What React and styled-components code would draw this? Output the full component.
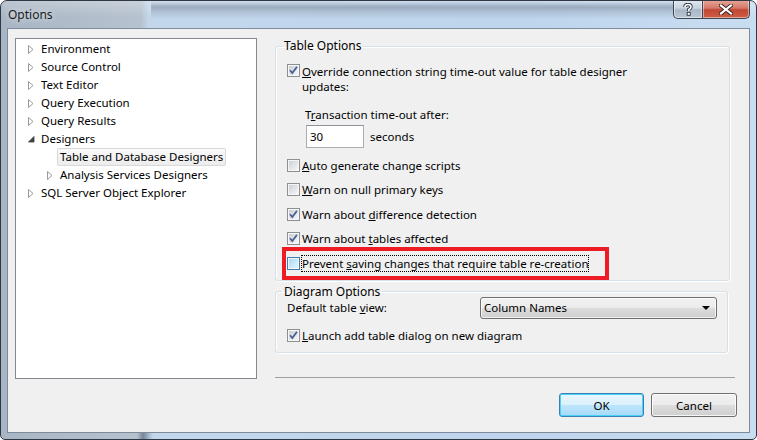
import React from "react";
import styled, { createGlobalStyle } from "styled-components";

const Global = createGlobalStyle`
  html, body { margin: 0; padding: 0; background: #fff; }
  body { font-family: "Noto Sans", "Liberation Sans", sans-serif; font-size: 11.5px; color: #000; }
`;

const Window = styled.div`
  width: 757px;
  height: 440px;
  box-sizing: border-box;
  border: 1px solid #2f3742;
  border-radius: 7px 7px 5px 5px;
  display: flex;
  flex-direction: column;
  overflow: hidden;
  background:
    linear-gradient(to right, rgba(40,50,70,0) 0, rgba(40,50,70,0) 136px, rgba(40,55,80,0.45) 142px, rgba(40,55,80,0) 152px) bottom / 100% 7px no-repeat,
    linear-gradient(to right, #a8b5c4 0, #b6c2cf 140px, #c3d7ec 148px, #bed5ed 70%, #c9ddf1 100%);
`;

const TitleBar = styled.div`
  height: 27px;
  display: flex;
  align-items: flex-start;
  padding-left: 7px;
  background:
    linear-gradient(to bottom, rgba(70,80,100,0) 0, rgba(70,80,100,0.35) 6px, rgba(70,80,100,0.15) 12px, rgba(70,80,100,0) 18px) 150px 0 / 530px 27px no-repeat,
    linear-gradient(to bottom, rgba(255,255,255,0.25), rgba(255,255,255,0) 60%);
`;

const Caption = styled.span`
  line-height: 28px;
  font-size: 12px;
  color: #1b1b1b;
  text-shadow: 0 0 6px rgba(255,255,255,0.9);
`;

const CaptionButtons = styled.div`
  margin-left: auto;
  margin-right: 6px;
  margin-top: -1px;
  display: flex;
`;

const CaptionButton = styled.div`
  height: 19px;
  box-sizing: border-box;
  display: flex;
  align-items: center;
  justify-content: center;
  border: 1px solid #3d4654;
  border-top: none;
  width: ${p => p.$w}px;
  border-radius: ${p => (p.$close ? "0 0 5px 0" : "0 0 0 5px")};
  border-left: ${p => (p.$close ? "none" : "1px solid #3d4654")};
  background: ${p =>
    p.$close
      ? "linear-gradient(to bottom, #e9a99b 0, #d5786a 45%, #c24633 55%, #cf5f45 100%)"
      : "linear-gradient(to bottom, #e3e9f0 0, #c9d3de 45%, #a9b7c6 55%, #b9c7d5 100%)"};
  box-shadow: inset 0 0 0 1px rgba(255,255,255,0.45);
`;

const Client = styled.div`
  flex: 1;
  margin: 0 6px 6px 6px;
  border: 1px solid #7d8b9a;
  background: #f0f0f0;
  display: flex;
  padding: 9px 12px 0 7px;
`;

const Tree = styled.div`
  width: 242px;
  height: 341px;
  box-sizing: border-box;
  border: 1px solid #828790;
  background: #fff;
  flex-shrink: 0;
  padding-top: 1px;
`;

const TreeRow = styled.div`
  height: 18px;
  display: flex;
  align-items: center;
  padding-left: ${p => 10 + p.$level * 19}px;
`;

const Expander = styled.span`
  width: 12px;
  height: 18px;
  display: flex;
  align-items: center;
  padding-left: 2px;
  box-sizing: border-box;
`;

const TreeLabel = styled.span`
  padding: 0 2px;
  height: 18px;
  line-height: 16px;
  box-sizing: border-box;
  border: 1px solid ${p => (p.$selected ? "#d9d9d9" : "transparent")};
  border-radius: 2px;
  background: ${p => (p.$selected ? "linear-gradient(to bottom, #fafafa, #ececec)" : "transparent")};
  white-space: nowrap;
`;

const Right = styled.div`
  margin-left: 18px;
  flex: 1;
  display: flex;
  flex-direction: column;
`;

const Group = styled.fieldset`
  margin: ${p => p.$mt || 0}px 0 0 0;
  padding: 0;
  width: ${p => p.$w}px;
  box-sizing: border-box;
  border: 1px solid #d5dfe5;
  border-radius: 3px;
  box-shadow: inset 1px 1px 0 #fff, 1px 1px 0 #fff;
  min-width: 0;
`;

const Legend = styled.legend`
  margin-left: 6px;
  padding: 0 2px;
  line-height: 16px;
  font-size: 12px;
`;

const GroupBody = styled.div`
  padding: ${p => p.$pt}px 0 ${p => p.$pb}px 11px;
  display: flex;
  flex-direction: column;
`;

const CheckRow = styled.div`
  display: flex;
  align-items: ${p => (p.$multi ? "flex-start" : "center")};
  width: fit-content;
  min-height: 18.5px;
  margin-top: ${p => p.$mt || 0}px;
  position: relative;
  ${p =>
    p.$marked &&
    `
    &::after {
      content: "";
      position: absolute;
      left: -5px;
      top: -7px;
      right: -20px;
      bottom: -7px;
      border: 4px solid #ed1c24;
      pointer-events: none;
    }
  `}
`;

const Box = styled.svg`
  flex-shrink: 0;
  margin-right: 1px;
  margin-top: ${p => (p.$multi ? "1px" : "0")};
`;

const CheckText = styled.span`
  border: 1px ${p => (p.$focus ? "dotted #000" : "solid transparent")};
  line-height: 15px;
  max-width: 340px;
`;

const SubLabel = styled.div`
  margin: 12px 0 0 18px;
  line-height: 15px;
`;

const TimeoutRow = styled.div`
  display: flex;
  align-items: center;
  margin: 3px 0 0 19px;
  gap: 6px;
`;

const TextBox = styled.div`
  width: 58px;
  height: 23px;
  box-sizing: border-box;
  border: 1px solid #abadb3;
  border-top-color: #8e929a;
  background: #fff;
  padding-left: 3px;
  line-height: 21px;
`;

const ChecksList = styled.div`
  display: flex;
  flex-direction: column;
  gap: 6px;
  margin-top: 8px;
`;

const ViewRow = styled.div`
  display: flex;
  align-items: center;
  margin-top: -3px;
`;

const ViewLabel = styled.span`
  width: 193px;
`;

const Combo = styled.div`
  width: 237px;
  height: 22px;
  box-sizing: border-box;
  border: 1px solid #707070;
  border-radius: 3px;
  background: linear-gradient(to bottom, #f2f2f2 0, #ebebeb 50%, #dddddd 50%, #cfcfcf 100%);
  box-shadow: inset 0 0 0 1px rgba(255,255,255,0.7);
  display: flex;
  align-items: center;
  padding: 0 6px 0 3px;
`;

const ComboText = styled.span`
  flex: 1;
`;

const Separator = styled.div`
  height: 1px;
  margin: 24px 2px 0 0;
  background: #a0a0a0;
`;

const ButtonRow = styled.div`
  display: flex;
  justify-content: flex-end;
  gap: 7px;
  margin-top: 15px;
`;

const Button = styled.div`
  width: ${p => p.$w}px;
  height: 24px;
  box-sizing: border-box;
  border: 1px solid ${p => (p.$primary ? "#3c7fb1" : "#707070")};
  border-radius: 3px;
  display: flex;
  align-items: center;
  justify-content: center;
  background: ${p =>
    p.$primary
      ? "linear-gradient(to bottom, #eaf6fd 0, #d9f0fc 50%, #bee6fd 50%, #a7d9f5 100%)"
      : "linear-gradient(to bottom, #f2f2f2 0, #ebebeb 50%, #dddddd 50%, #cfcfcf 100%)"};
  box-shadow: ${p =>
    p.$primary ? "inset 0 0 0 1px #48d3fb" : "inset 0 0 0 1px rgba(255,255,255,0.8)"};
`;

const Check = ({ checked, hot, multi }) => (
  <Box width="13" height="13" viewBox="0 0 13 13" $multi={multi}>
    <defs>
      <linearGradient id="cbNormal" x1="0" y1="0" x2="1" y2="1">
        <stop offset="0" stopColor="#cbcfd5" />
        <stop offset="1" stopColor="#f7f7f7" />
      </linearGradient>
      <linearGradient id="cbHot" x1="0" y1="0" x2="1" y2="1">
        <stop offset="0" stopColor="#a9dbf8" />
        <stop offset="1" stopColor="#e4f4fd" />
      </linearGradient>
    </defs>
    <rect x="0.5" y="0.5" width="12" height="12" fill="#f6f6f6" stroke={hot ? "#3c7fb1" : "#8e8f8f"} />
    <rect x="2" y="2" width="9" height="9" fill={hot ? "url(#cbHot)" : "url(#cbNormal)"} />
    {checked && (
      <path d="M3 6.2 L5.3 9 L10 2.8" stroke="#4a5f97" strokeWidth="1.8" fill="none" />
    )}
  </Box>
);

const Closed = () => (
  <svg width="6" height="9" viewBox="0 0 6 9">
    <path d="M0.5 0.5 L5 4.5 L0.5 8.5 Z" fill="#fff" stroke="#9a9a9a" />
  </svg>
);

const Opened = () => (
  <svg width="7" height="7" viewBox="0 0 7 7">
    <path d="M6 0.5 L6 6 L0.5 6 Z" fill="#3f3f3f" stroke="#3f3f3f" strokeWidth="0.8" />
  </svg>
);

const treeItems = [
  { label: "Environment", level: 0, kind: "closed" },
  { label: "Source Control", level: 0, kind: "closed" },
  { label: "Text Editor", level: 0, kind: "closed" },
  { label: "Query Execution", level: 0, kind: "closed" },
  { label: "Query Results", level: 0, kind: "closed" },
  { label: "Designers", level: 0, kind: "open" },
  { label: "Table and Database Designers", level: 1, kind: "leaf", selected: true },
  { label: "Analysis Services Designers", level: 1, kind: "closed" },
  { label: "SQL Server Object Explorer", level: 0, kind: "closed" },
];

export default function App() {
  return (
    <>
      <Global />
      <Window>
        <TitleBar>
          <Caption>Options</Caption>
          <CaptionButtons>
            <CaptionButton $w={30}>
              <svg width="10" height="13" viewBox="0 0 10 13">
                <path d="M2 4 Q2 1.5 5 1.5 Q8 1.5 8 4 Q8 5.5 5.8 6.6 L5.8 8" stroke="#2c3440" strokeWidth="3.4" fill="none" />
                <path d="M2 4 Q2 1.5 5 1.5 Q8 1.5 8 4 Q8 5.5 5.8 6.6 L5.8 8" stroke="#fff" strokeWidth="1.7" fill="none" />
                <rect x="4.2" y="9.3" width="3" height="3" fill="#fff" stroke="#2c3440" strokeWidth="0.9" />
              </svg>
            </CaptionButton>
            <CaptionButton $w={47} $close>
              <svg width="14" height="11" viewBox="0 0 14 11">
                <path d="M2 1.5 L12 9.5 M12 1.5 L2 9.5" stroke="#3a2420" strokeWidth="4" strokeLinecap="square" />
                <path d="M2 1.5 L12 9.5 M12 1.5 L2 9.5" stroke="#fff" strokeWidth="2.2" strokeLinecap="square" />
              </svg>
            </CaptionButton>
          </CaptionButtons>
        </TitleBar>
        <Client>
          <Tree>
            {treeItems.map(item => (
              <TreeRow key={item.label} $level={item.level}>
                <Expander>
                  {item.kind === "closed" && <Closed />}
                  {item.kind === "open" && <Opened />}
                </Expander>
                <TreeLabel $selected={item.selected}>{item.label}</TreeLabel>
              </TreeRow>
            ))}
          </Tree>
          <Right>
            <Group $w={455}>
              <Legend>Table Options</Legend>
              <GroupBody $pt={9} $pb={7}>
                <CheckRow $multi>
                  <Check checked multi />
                  <CheckText>
                    <u>O</u>verride connection string time-out value for table designer updates:
                  </CheckText>
                </CheckRow>
                <SubLabel>
                  T<u>r</u>ansaction time-out after:
                </SubLabel>
                <TimeoutRow>
                  <TextBox>30</TextBox>
                  <span>seconds</span>
                </TimeoutRow>
                <ChecksList>
                  <CheckRow>
                    <Check />
                    <CheckText>
                      <u>A</u>uto generate change scripts
                    </CheckText>
                  </CheckRow>
                  <CheckRow>
                    <Check />
                    <CheckText>
                      <u>W</u>arn on null primary keys
                    </CheckText>
                  </CheckRow>
                  <CheckRow>
                    <Check checked />
                    <CheckText>
                      Warn about <u>d</u>ifference detection
                    </CheckText>
                  </CheckRow>
                  <CheckRow>
                    <Check checked />
                    <CheckText>
                      Warn about <u>t</u>ables affected
                    </CheckText>
                  </CheckRow>
                  <CheckRow $marked>
                    <Check hot />
                    <CheckText $focus>
                      Prevent <u>s</u>aving changes that require table re-creation
                    </CheckText>
                  </CheckRow>
                </ChecksList>
              </GroupBody>
            </Group>
            <Group $w={453} $mt={3}>
              <Legend>Diagram Options</Legend>
              <GroupBody $pt={0} $pb={7}>
                <ViewRow>
                  <ViewLabel>
                    Default table <u>v</u>iew:
                  </ViewLabel>
                  <Combo>
                    <ComboText>Column Names</ComboText>
                    <svg width="8" height="4" viewBox="0 0 8 4">
                      <path d="M0 0 L8 0 L4 4 Z" fill="#000" />
                    </svg>
                  </Combo>
                </ViewRow>
                <CheckRow $mt={8}>
                  <Check checked />
                  <CheckText>
                    <u>L</u>aunch add table dialog on new diagram
                  </CheckText>
                </CheckRow>
              </GroupBody>
            </Group>
            <Separator />
            <ButtonRow>
              <Button $w={85} $primary>OK</Button>
              <Button $w={86}>Cancel</Button>
            </ButtonRow>
          </Right>
        </Client>
      </Window>
    </>
  );
}
